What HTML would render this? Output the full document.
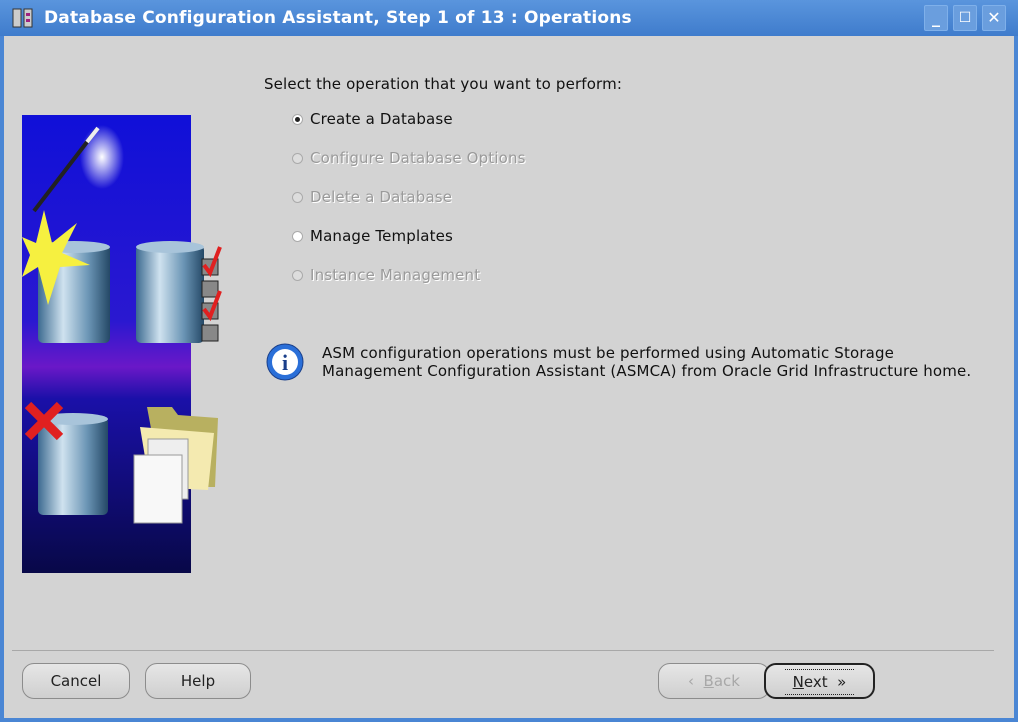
<!DOCTYPE html>
<html><head><style>
*{margin:0;padding:0;box-sizing:border-box}
body{width:1018px;height:722px;overflow:hidden;background:#4a86d4;font-family:"DejaVu Sans","Liberation Sans",sans-serif;position:relative}
#title{position:absolute;left:0;top:0;width:1018px;height:36px;background:linear-gradient(#5a95dd,#3f7ccc);}
#title .t{position:absolute;left:44px;top:8px;color:#fff;font-weight:bold;font-size:17px;letter-spacing:0.2px}
.wb{position:absolute;top:5px;width:24px;height:26px;background:#6a9ede;border:1px solid #7fb0ea;border-radius:2px;color:#fff;font-weight:bold;text-align:center;font-size:16px;line-height:24px}
#body{position:absolute;left:4px;top:36px;width:1010px;height:682px;background:#d3d3d3}
.abs{position:absolute}
.txt{font-size:15px;color:#111;letter-spacing:0.15px}
.dis{color:#9a9a9a;text-shadow:1px 1px 0 #fff}
.rad{position:absolute;width:11px;height:11px;border-radius:50%;background:#fff;border:1px solid #aaa}
.btn{position:absolute;height:36px;border:1px solid #8c8c8c;border-radius:12px;background:linear-gradient(#e6e6e6,#cfcfcf);font-size:15px;color:#222;text-align:center;line-height:34px}
</style></head><body>
<div id="title">
 <svg class="abs" style="left:12px;top:8px" width="22" height="20"><rect x="1" y="1" width="8" height="18" fill="#ccc" stroke="#333"/><rect x="12" y="1" width="8" height="18" fill="#ccc" stroke="#333"/><rect x="14" y="5" width="4" height="3" fill="#a02080"/><rect x="14" y="11" width="4" height="3" fill="#a02080"/></svg>
 <div class="t">Database Configuration Assistant, Step 1 of 13 : Operations</div>
 <div class="wb" style="left:924px">_</div>
 <div class="wb" style="left:953px;font-size:14px">☐</div>
 <div class="wb" style="left:982px">✕</div>
</div>
<div id="body">
 <svg class="abs" style="left:18px;top:79px;overflow:visible" width="200" height="458">
  <defs>
   <linearGradient id="bg" x1="0" y1="0" x2="0" y2="1"><stop offset="0" stop-color="#1010d8"/><stop offset="0.45" stop-color="#2a18d0"/><stop offset="0.55" stop-color="#6a18c8"/><stop offset="0.62" stop-color="#1a10a8"/><stop offset="1" stop-color="#080848"/></linearGradient>
   <linearGradient id="cyl" x1="0" x2="1"><stop offset="0" stop-color="#3c6a90"/><stop offset="0.35" stop-color="#cfe2ef"/><stop offset="0.7" stop-color="#6b95b5"/><stop offset="1" stop-color="#244866"/></linearGradient>
   <radialGradient id="glow"><stop offset="0" stop-color="#fff"/><stop offset="1" stop-color="#fff" stop-opacity="0"/></radialGradient>
  </defs>
  <rect width="169" height="458" fill="url(#bg)"/>
  <ellipse cx="80" cy="42" rx="22" ry="32" fill="url(#glow)"/>
  <line x1="12" y1="96" x2="75" y2="14" stroke="#222" stroke-width="4"/><line x1="65" y1="27" x2="76" y2="13" stroke="#eee" stroke-width="4"/>
  <g fill="url(#cyl)">
   <rect x="16" y="130" width="72" height="98" rx="5"/><ellipse cx="52" cy="132" rx="36" ry="6" fill="#a8c4da"/>
   <rect x="114" y="130" width="68" height="98" rx="5"/><ellipse cx="148" cy="132" rx="34" ry="6" fill="#a8c4da"/>
   <rect x="16" y="302" width="70" height="98" rx="5"/><ellipse cx="51" cy="304" rx="35" ry="6" fill="#a8c4da"/>
  </g>
  <polygon points="22,95 30,128 55,108 40,138 68,150 38,152 26,190 16,152 0,162 8,140 0,122 14,128" fill="#f6f040"/>
  <g fill="#888" stroke="#222"><rect x="180" y="144" width="16" height="16"/><rect x="180" y="166" width="16" height="16"/><rect x="180" y="188" width="16" height="16"/><rect x="180" y="210" width="16" height="16"/></g>
  <path d="M182,150 L188,158 L198,132 M182,194 L188,202 L198,176" stroke="#e02020" stroke-width="4" fill="none"/>
  <path d="M6,290 L38,322 M38,290 L6,322" stroke="#e02020" stroke-width="9" fill="none"/>
  <path d="M125,292 L150,292 L156,300 L196,303 L193,372 L140,372 Z" fill="#b8b060"/>
  <path d="M118,312 L192,318 L186,375 L128,372 Z" fill="#f4eab0"/>
  <rect x="126" y="324" width="40" height="60" fill="#eee" stroke="#999"/>
  <rect x="112" y="340" width="48" height="68" fill="#f8f8f8" stroke="#999"/>
 </svg>
 <div class="abs txt" style="left:260px;top:39px">Select the operation that you want to perform:</div>
 <div class="rad" style="left:288px;top:78px"><div style="width:5px;height:5px;background:#222;border-radius:50%;margin:2px"></div></div>
 <div class="abs txt" style="left:306px;top:74px">Create a Database</div>
 <div class="rad" style="left:288px;top:117px;background:#ddd"></div>
 <div class="abs txt dis" style="left:306px;top:113px">Configure Database Options</div>
 <div class="rad" style="left:288px;top:156px;background:#ddd"></div>
 <div class="abs txt dis" style="left:306px;top:152px">Delete a Database</div>
 <div class="rad" style="left:288px;top:195px"></div>
 <div class="abs txt" style="left:306px;top:191px">Manage Templates</div>
 <div class="rad" style="left:288px;top:234px;background:#ddd"></div>
 <div class="abs txt dis" style="left:306px;top:230px">Instance Management</div>
 <svg class="abs" style="left:261px;top:306px" width="40" height="40"><circle cx="20" cy="20" r="18" fill="#2a6fd8" stroke="#1a3f8a"/><circle cx="20" cy="20" r="13" fill="#fff"/><text x="20" y="28" text-anchor="middle" font-family="Liberation Serif" font-weight="bold" font-size="22" fill="#1a3f8a">i</text></svg>
 <div class="abs txt" style="left:318px;top:308px;line-height:18px">ASM configuration operations must be performed using Automatic Storage<br>Management Configuration Assistant (ASMCA) from Oracle Grid Infrastructure home.</div>
 <div class="abs" style="left:8px;top:614px;width:982px;height:1px;background:#a8a8a8"></div>
 <div class="btn" style="left:18px;top:627px;width:108px">Cancel</div>
 <div class="btn" style="left:141px;top:627px;width:106px">Help</div>
 <div class="btn" style="left:654px;top:627px;width:112px;color:#a8a8a8">&lsaquo;&nbsp; <u>B</u>ack</div>
 <div class="btn" style="left:760px;top:627px;width:111px;border:2px solid #222;"><span style="border-top:1px dotted #222;border-bottom:1px dotted #222;padding:3px 8px"><u>N</u>ext &nbsp;&raquo;</span></div>
</div>
</body></html>
